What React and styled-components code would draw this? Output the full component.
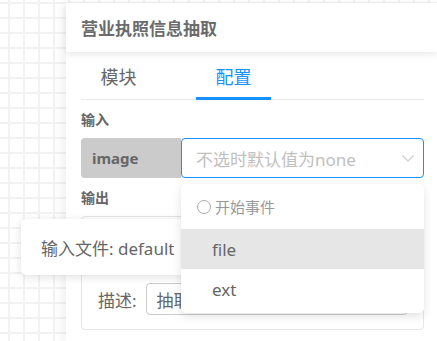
import React from 'react'
import styled, { createGlobalStyle } from 'styled-components'

const GlobalStyle = createGlobalStyle`
 html, body {
  margin: 0;
  padding: 0;
 }
 body {
  width: 437px;
  height: 341px;
  overflow: hidden;
  font-family: "Noto Sans", "Noto Sans CJK SC", sans-serif;
  background-color: #fff;
  background-image:
   linear-gradient(to right, #f2f2f2 2px, transparent 2px),
   linear-gradient(to bottom, #f2f2f2 2px, transparent 2px);
  background-size: 15px 15px;
  background-position: 8px 2px;
 }
`

const Page = styled.div`
 position: relative;
 display: flex;
 height: 341px;
 padding-top: 3px;
 box-sizing: border-box;
`

const Canvas = styled.div`
 width: 66px;
 flex-shrink: 0;
`

const Panel = styled.div`
 flex: 1;
 background: #fff;
 box-shadow: -4px 0 10px rgba(0, 0, 0, 0.06);
 display: flex;
 flex-direction: column;
`

const Header = styled.div`
 height: 49px;
 display: flex;
 align-items: center;
 padding-left: 15px;
 font-size: 17px;
 font-weight: 700;
 color: #6b6b6b;
 box-shadow: 0 3px 6px rgba(0, 0, 0, 0.08);
 position: relative;
 z-index: 1;
`

const Body = styled.div`
 padding: 0 13px 0 15px;
`

const Tabs = styled.div`
 display: flex;
 gap: 40px;
 height: 47px;
 border-bottom: 1px solid #e8e8e8;
`

const Tab = styled.div`
 width: 75px;
 display: flex;
 align-items: center;
 justify-content: center;
 font-size: 18px;
 color: ${p => (p.active ? '#1890ff' : '#666')};
 border-bottom: 3px solid ${p => (p.active ? '#1890ff' : 'transparent')};
 margin-bottom: -1px;
 padding-top: 2px;
`

const SectionLabel = styled.div`
 font-size: 14px;
 font-weight: 700;
 color: #666;
 height: 38px;
 display: flex;
 align-items: center;
`

const Row = styled.div`
 display: flex;
 height: 40px;
`

const KeyBox = styled.div`
 width: 100px;
 background: #cbcbcb;
 border-radius: 4px 0 0 4px;
 display: flex;
 align-items: center;
 padding-left: 11px;
 box-sizing: border-box;
 font-size: 15px;
 font-weight: 700;
 color: #666;
`

const SelectWrap = styled.div`
 flex: 1;
 position: relative;
`

const Select = styled.div`
 height: 100%;
 border: 1px solid #1890ff;
 border-radius: 4px;
 box-sizing: border-box;
 display: flex;
 align-items: center;
 padding: 0 8px 0 14px;
 font-size: 17px;
 color: #c0c0c0;
`

const Placeholder = styled.span`
 flex: 1;
`

const Card = styled.div`
 border: 1px solid #e6e6e6;
 border-radius: 4px;
 height: 114px;
 box-sizing: border-box;
 display: flex;
 align-items: flex-end;
 padding: 0 15px 14px 16px;
`

const FieldRow = styled.div`
 display: flex;
 align-items: center;
 gap: 9px;
 flex: 1;
`

const FieldLabel = styled.span`
 font-size: 17px;
 color: #666;
`

const TextInput = styled.div`
 flex: 1;
 height: 30px;
 border: 1px solid #ccc;
 border-radius: 4px;
 display: flex;
 align-items: center;
 padding-left: 10px;
 font-size: 17px;
 color: #666;
`

const Dropdown = styled.div`
 position: absolute;
 top: calc(100% + 6px);
 left: 0;
 right: 0;
 background: #fff;
 border-radius: 5px;
 box-shadow: 0 3px 10px rgba(0, 0, 0, 0.12);
 padding-bottom: 4px;
 z-index: 5;
`

const Group = styled.div`
 height: 45px;
 display: flex;
 align-items: center;
 gap: 4px;
 padding-left: 16px;
 font-size: 15px;
 color: #999;
`

const Circle = styled.span`
 width: 12px;
 height: 12px;
 border: 1px solid #aaa;
 border-radius: 50%;
`

const Option = styled.div`
 height: 40px;
 display: flex;
 align-items: center;
 padding-left: 31px;
 font-size: 17px;
 color: #666;
 background: ${p => (p.hover ? '#e6e6e6' : 'transparent')};
`

const Tooltip = styled.div`
 position: absolute;
 left: 21px;
 top: 219px;
 width: 200px;
 height: 56px;
 background: #fff;
 border-radius: 5px;
 box-shadow: 0 2px 10px rgba(0, 0, 0, 0.12);
 display: flex;
 align-items: center;
 padding-left: 20px;
 box-sizing: border-box;
 font-size: 17px;
 color: #666;
 z-index: 3;
`

const Chevron = () => (
 <svg width="14" height="14" viewBox="0 0 14 14" fill="none">
  <path d="M1.5 4.5 L7 10 L12.5 4.5" stroke="#d0d0d0" strokeWidth="1.3" />
 </svg>
)

export default function App() {
 return (
  <>
   <GlobalStyle />
   <Page>
    <Canvas />
    <Panel>
     <Header>营业执照信息抽取</Header>
     <Body>
      <Tabs>
       <Tab>模块</Tab>
       <Tab active>配置</Tab>
      </Tabs>
      <SectionLabel>输入</SectionLabel>
      <Row>
       <KeyBox>image</KeyBox>
       <SelectWrap>
        <Select>
         <Placeholder>不选时默认值为none</Placeholder>
         <Chevron />
        </Select>
        <Dropdown>
         <Group>
          <Circle />
          开始事件
         </Group>
         <Option hover>file</Option>
         <Option>ext</Option>
        </Dropdown>
       </SelectWrap>
      </Row>
      <SectionLabel>输出</SectionLabel>
      <Card>
       <FieldRow>
        <FieldLabel>描述:</FieldLabel>
        <TextInput>抽取营业执照信息</TextInput>
       </FieldRow>
      </Card>
     </Body>
    </Panel>
    <Tooltip>输入文件: default</Tooltip>
   </Page>
  </>
 )
}
